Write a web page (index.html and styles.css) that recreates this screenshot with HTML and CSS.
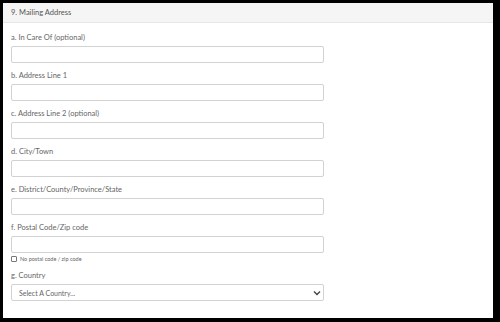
FILE: index.html
```html
<!DOCTYPE html>
<html lang="en">
  <head>
    <meta charset="UTF-8" />
    <meta name="viewport" content="width=device-width, initial-scale=1.0" />
    <title>Mailing Address</title>
    <link rel="stylesheet" href="styles.css">
  </head>
  <body>
    <div class="panel">
      <div class="panelHeader">9. Mailing Address</div>
      <form class="panelBody">
        <div class="field">
          <label for="careOf">a. In Care Of (optional)</label>
          <input type="text" id="careOf" class="inputElement" />
        </div>
        <div class="field">
          <label for="line1">b. Address Line 1</label>
          <input type="text" id="line1" class="inputElement" />
        </div>
        <div class="field">
          <label for="line2">c. Address Line 2 (optional)</label>
          <input type="text" id="line2" class="inputElement" />
        </div>
        <div class="field">
          <label for="city">d. City/Town</label>
          <input type="text" id="city" class="inputElement" />
        </div>
        <div class="field">
          <label for="state">e. District/County/Province/State</label>
          <input type="text" id="state" class="inputElement" />
        </div>
        <div class="field">
          <label for="postal">f. Postal Code/Zip code</label>
          <input type="text" id="postal" class="inputElement" />
          <div class="checkRow">
            <input type="checkbox" id="noPostal" class="checkBox" />
            <label for="noPostal">No postal code / zip code</label>
          </div>
        </div>
        <div class="field">
          <label for="country">g. Country</label>
          <div class="selectWrap">
            <select id="country" class="inputElement selectElement">
              <option>Select A Country...</option>
            </select>
            <svg class="chevron" width="8" height="6" viewBox="0 0 8 6">
              <path d="M1 1.5 L4 4.5 L7 1.5" fill="none" stroke="#444" stroke-width="1.4" />
            </svg>
          </div>
        </div>
      </form>
    </div>
  </body>
</html>
```

FILE: styles.css
```css
html,
body {
  height: 100%;
}

body {
  margin: 0;
  padding: 3px 7px 4px 3px;
  box-sizing: border-box;
  background: #000;
  font-family: 'Lato', 'Liberation Sans', sans-serif;
  color: #666;
}

.panel {
  height: 100%;
  background: #fff;
}

.panelHeader {
  height: 19px;
  line-height: 19px;
  padding-left: 8px;
  background: #f5f5f5;
  border-bottom: 1px solid #e6e6e6;
  font-size: 7.5px;
  color: #555;
}

.panelBody {
  padding: 9px 8px 0 8px;
}

.field {
  margin-bottom: 7px;
}

.field > label {
  display: block;
  height: 11px;
  line-height: 11px;
  margin-bottom: 3px;
  font-size: 7.5px;
}

.inputElement {
  display: block;
  box-sizing: border-box;
  width: 313px;
  height: 17px;
  margin: 0;
  padding: 0 7px;
  border: 1px solid #d2d2d2;
  border-radius: 2px;
  background: #fff;
  font-family: inherit;
  font-size: 7px;
  color: #666;
}

.checkRow {
  display: flex;
  align-items: center;
  height: 8px;
  margin-top: 2px;
  margin-bottom: 4px;
  font-size: 5.5px;
}

.checkBox {
  appearance: none;
  width: 6px;
  height: 6px;
  margin: 0 3px 0 0;
  border: 1px solid #777;
  border-radius: 1px;
  box-sizing: border-box;
}

.selectWrap {
  position: relative;
  width: 313px;
}

.selectElement {
  appearance: none;
  padding-left: 7px;
}

.chevron {
  position: absolute;
  right: 3px;
  top: 6px;
}
```
